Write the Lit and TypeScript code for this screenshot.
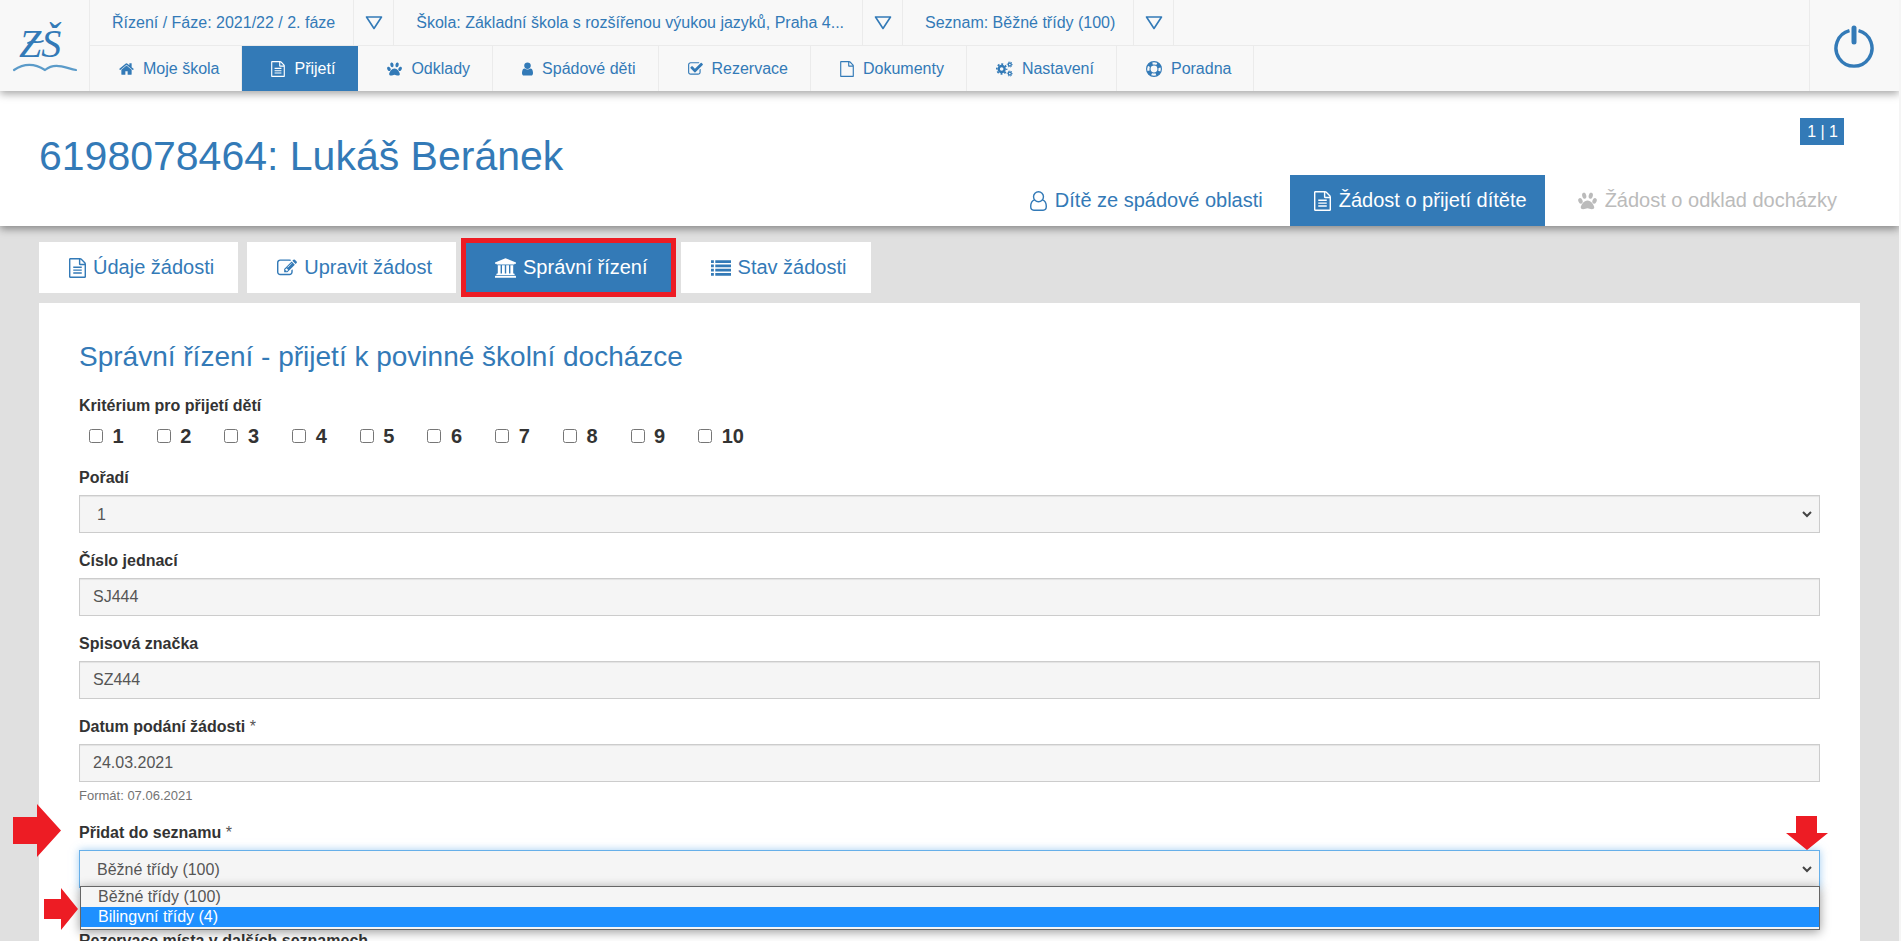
import { LitElement, html, css, svg } from "lit";
import { customElement, property } from "lit/decorators.js";

const fileOutline =
  "M1596 380q28 28 48 76t20 88v1152q0 40-28 68t-68 28h-1344q-40 0-68-28t-28-68v-1600q0-40 28-68t68-28h896q40 0 88 20t76 48zm-444-244v376h376q-10-29-22-41l-313-313q-12-12-41-22zm384 1528v-1024h-416q-40 0-68-28t-28-68v-416h-768v1536h1280z";

const gear = (cx: number, cy: number, r: number, w: number, teeth: number) => {
  const outer = r + w / 2 + w * 0.3;
  const dash = (2 * Math.PI * outer) / (teeth * 2);
  return svg`
    <circle cx=${cx} cy=${cy} r=${r} fill="none" stroke="currentColor" stroke-width=${w}></circle>
    <circle cx=${cx} cy=${cy} r=${outer} fill="none" stroke="currentColor" stroke-width=${w * 0.7}
      stroke-dasharray="${dash} ${dash}" stroke-dashoffset=${dash / 2}></circle>`;
};

const icons: Record<string, { box: string; ratio: number; art: unknown }> = {
  home: {
    box: "64 0 1664 1792",
    ratio: 1664 / 1792,
    art: svg`<path d="M1472 992v480q0 26-19 45t-45 19h-384v-384h-256v384h-384q-26 0-45-19t-19-45v-480q0-1 .5-3t.5-3l575-474 575 474q1 2 1 6zm223-69l-62 74q-8 9-21 11h-3q-13 0-21-7l-692-577-692 577q-12 8-24 7-13-2-21-11l-62-74q-8-10-7-23.5t11-21.5l719-599q32-26 76-26t76 26l244 204v-195q0-14 9-23t23-9h192q14 0 23 9t9 23v408l219 182q10 8 11 21.5t-7 23.5z"></path>`,
  },
  fileText: {
    box: "128 0 1536 1792",
    ratio: 1536 / 1792,
    art: svg`<path d=${fileOutline}></path><path d="M512 768h768v128h-768zM512 1024h768v128h-768zM512 1280h768v128h-768z"></path>`,
  },
  file: { box: "128 0 1536 1792", ratio: 1536 / 1792, art: svg`<path d=${fileOutline}></path>` },
  paw: {
    box: "64 64 1664 1664",
    ratio: 1664 / 1792,
    art: svg`
      <ellipse cx="610" cy="430" rx="180" ry="270" transform="rotate(-14 610 430)"></ellipse>
      <ellipse cx="1182" cy="430" rx="180" ry="270" transform="rotate(14 1182 430)"></ellipse>
      <ellipse cx="278" cy="880" rx="180" ry="250" transform="rotate(-24 278 880)"></ellipse>
      <ellipse cx="1514" cy="880" rx="180" ry="250" transform="rotate(24 1514 880)"></ellipse>
      <path d="M896 850c300 0 590 400 590 620 0 110-80 146-206 146-150 0-260-90-384-90s-240 90-390 90c-120 0-200-36-200-146 0-220 290-620 590-620z"></path>`,
  },
  user: {
    box: "256 0 1280 1792",
    ratio: 1280 / 1792,
    art: svg`<path d="M1536 1399q0 109-62.5 187t-150.5 78h-854q-88 0-150.5-78t-62.5-187q0-85 8.5-160.5t31.5-152 58.5-131 94-89 134.5-34.5q131 128 313 128t313-128q76 0 134.500 34.500t94 89 58.500 131 31.500 152 8.500 160.500zm-256-887q0 159-112.500 271.500t-271.500 112.500-271.500-112.500-112.500-271.500 112.500-271.500 271.500-112.500 271.500 112.500 112.500 271.500z"></path>`,
  },
  userOutline: {
    box: "0 0 1536 1792",
    ratio: 1536 / 1792,
    art: svg`<g fill="none" stroke="currentColor" stroke-width="128"><circle cx="768" cy="512" r="448"></circle><path d="M410 790Q64 900 64 1400Q64 1728 352 1728H1184Q1472 1728 1472 1400Q1472 900 1126 790"></path></g>`,
  },
  check: {
    box: "64 0 1664 1792",
    ratio: 1664 / 1792,
    art: svg`<path d="M1472 930v318q0 119-84.5 203.5t-203.5 84.5h-832q-119 0-203.5-84.5t-84.5-203.5v-832q0-119 84.5-203.5t203.5-84.5h832q63 0 117 25 15 7 18 23 3 17-9 29l-49 49q-10 10-23 10-3 0-9-2-23-6-45-6h-832q-66 0-113 47t-47 113v832q0 66 47 113t113 47h832q66 0 113-47t47-113v-254q0-13 9-22l64-64q10-10 23-10 6 0 12 3 20 8 20 29zm231-489l-814 814q-24 24-57 24t-57-24l-430-430q-24-24-24-57t24-57l110-110q24-24 57-24t57 24l263 263 647-647q24-24 57-24t57 24l110 110q24 24 24 57t-24 57z"></path>`,
  },
  gears: {
    box: "0 0 1920 1792",
    ratio: 1920 / 1792,
    art: svg`${gear(640, 896, 340, 270, 8)}${gear(1560, 384, 170, 150, 6)}${gear(1560, 1408, 170, 150, 6)}`,
  },
  ring: {
    box: "0 0 1792 1792",
    ratio: 1,
    art: svg`<g fill="none" stroke="currentColor"><circle cx="896" cy="896" r="832" stroke-width="128"></circle><circle cx="896" cy="896" r="448" stroke-width="128"></circle><circle cx="896" cy="896" r="640" stroke-width="400" pathLength="80" stroke-dasharray="10 10" stroke-dashoffset="-5"></circle></g>`,
  },
  edit: {
    box: "0 0 1792 1792",
    ratio: 1,
    art: svg`<path d="M888 1184l116-116-152-152-116 116v56h96v96h56zm440-720q-16-16-33 1l-350 350q-17 17-1 33t33-1l350-350q17-17 1-33zm80 594v190q0 119-84.5 203.5t-203.5 84.5h-832q-119 0-203.5-84.5t-84.5-203.5v-832q0-119 84.5-203.5t203.5-84.5h832q63 0 117 25 15 7 18 23 3 17-9 29l-49 49q-14 14-32 8-23-6-45-6h-832q-66 0-113 47t-47 113v832q0 66 47 113t113 47h832q66 0 113-47t47-113v-126q0-13 9-22l64-64q15-15 35-7t20 29zm-96-738l288 288-672 672h-288v-288zm444 132l-92 92-288-288 92-92q28-28 68-28t68 28l152 152q28 28 28 68t-28 68z"></path>`,
  },
  bank: {
    box: "0 0 1920 1792",
    ratio: 1920 / 1792,
    art: svg`<path d="M960 0l960 384v128h-128q0 26-20.5 45t-48.5 19h-1526q-28 0-48.5-19t-20.5-45h-128v-128zm-704 640h256v768h128v-768h256v768h128v-768h256v768h128v-768h256v768h59q28 0 48.5 19t20.5 45v64h-1664v-64q0-26 20.5-45t48.5-19h59v-768zm1595 960q28 0 48.5 19t20.5 45v128h-1920v-128q0-26 20.5-45t48.5-19h1782z"></path>`,
  },
  list: {
    box: "0 0 1792 1792",
    ratio: 1,
    art: svg`${[192, 576, 960, 1344].map(
      (y) => svg`<path d="M0 ${y}h256v256h-256zM384 ${y}h1408v256h-1408z"></path>`,
    )}`,
  },
};

@customElement("fa-icon")
export class FaIcon extends LitElement {
  @property() name = "file";
  @property({ type: Number }) size = 16;

  static styles = css`
    :host {
      display: inline-flex;
      flex: none;
    }
    svg {
      display: block;
      fill: currentColor;
    }
  `;

  render() {
    const icon = icons[this.name];
    return html`<svg
      viewBox=${icon.box}
      width=${Math.round(this.size * icon.ratio)}
      height=${this.size}
      preserveAspectRatio="xMidYMid meet"
      aria-hidden="true"
    >${icon.art}</svg>`;
  }
}

@customElement("app-root")
export class AppRoot extends LitElement {
  static styles = css`
    :host {
      display: block;
      box-sizing: border-box;
      height: 100vh;
      overflow-x: hidden;
      overflow-y: auto;
      scrollbar-width: none;
      border-right: 2px solid #f5f5f5;
      background: #e0e0e0;
      color: #333;
      font: 16px/23px "Liberation Sans", Arial, sans-serif;
      --blue: #337ab7;
      --red: #ed1c24;
    }
    * {
      box-sizing: border-box;
    }
    a {
      color: var(--blue);
      text-decoration: none;
    }

    .topbar {
      position: relative;
      z-index: 2;
      display: flex;
      height: 91px;
      background: #f8f8f8;
      box-shadow: 0 3px 8px rgba(0, 0, 0, 0.35);
    }
    .logo {
      display: flex;
      width: 90px;
      border-right: 1px solid #ebebeb;
    }
    .logo text {
      font: italic 40px "Liberation Serif", serif;
      fill: var(--blue);
    }
    .rows {
      flex: 1;
      min-width: 0;
    }
    .row {
      display: flex;
      height: 46px;
      white-space: nowrap;
    }
    .row.context {
      border-bottom: 1px solid #ebebeb;
    }
    .row.menu {
      height: 45px;
    }
    .context a,
    .context button {
      display: flex;
      align-items: center;
      border: 0;
      border-right: 1px solid #ebebeb;
      background: none;
    }
    .context a {
      padding: 0 18px 0 22px;
    }
    .context button {
      width: 40px;
      padding: 0;
      justify-content: center;
      color: var(--blue);
    }
    .menu a {
      display: flex;
      align-items: center;
      gap: 9px;
      padding: 0 22px 0 29px;
      border-right: 1px solid #ebebeb;
    }
    .menu a.active {
      background: var(--blue);
      border-color: var(--blue);
      color: #fff;
    }
    .power {
      display: flex;
      width: 90px;
      align-items: center;
      justify-content: center;
      padding: 0 2px 0 0;
      border: 0;
      border-left: 1px solid #ebebeb;
      background: none;
      color: var(--blue);
    }

    .titlebar {
      position: relative;
      z-index: 1;
      display: flex;
      justify-content: space-between;
      padding-left: 39px;
      background: #fff;
      box-shadow: 0 3px 8px rgba(0, 0, 0, 0.4);
    }
    h1 {
      margin: 43px 0 0;
      color: var(--blue);
      font-size: 41px;
      line-height: 45px;
      font-weight: 400;
    }
    .side {
      display: flex;
      flex-direction: column;
      align-items: flex-end;
      gap: 30px;
      padding: 27px 44px 0 0;
    }
    .badge {
      padding: 0 6px 0 7px;
      background: var(--blue);
      color: #fff;
      line-height: 27px;
      margin-right: 11px;
    }
    .tabs {
      display: flex;
      font-size: 20px;
      gap: 9px;
    }
    .tabs a {
      display: flex;
      align-items: center;
      gap: 7px;
      height: 51px;
    }
    .tabs a.active {
      background: var(--blue);
      color: #fff;
    }
    .scopes a {
      gap: 8px;
      padding: 0 18px 0 24px;
    }
    .scopes a.disabled {
      color: #bbb;
    }
    .sections {
      padding: 16px 39px 10px;
    }
    .sections a {
      padding: 0 24px 0 30px;
      background: #fff;
    }
    .sections a.active {
      outline: 5px solid var(--red);
      outline-offset: -1px;
    }

    .panel {
      margin: 0 39px;
      padding: 38px 40px 40px;
      background: #fff;
    }
    h2 {
      margin: 0 0 22px;
      color: var(--blue);
      font-size: 28px;
      line-height: 31px;
      font-weight: 400;
    }
    .field {
      position: relative;
      margin: 0 0 16px;
      padding: 0;
      border: 0;
    }
    .field.open {
      margin-bottom: 41px;
    }
    .caption {
      display: block;
      margin: 0 0 6px;
      padding: 0;
      font-weight: 700;
    }
    .caption abbr {
      font-weight: 400;
      text-decoration: none;
      color: #555;
    }
    .checks {
      display: flex;
      gap: 33px;
      margin: -2px 0;
      padding-left: 10px;
      font-size: 20px;
      line-height: 31px;
      font-weight: 700;
    }
    .checks input {
      width: 14px;
      height: 14px;
      margin: 0 4px 0 0;
      vertical-align: 0;
    }
    .control {
      display: block;
      width: 100%;
      height: 38px;
      padding: 6px 13px;
      border: 1px solid #ccc;
      border-radius: 0;
      outline: 0;
      background: #f5f5f5;
      box-shadow: inset 0 1px 1px rgba(0, 0, 0, 0.075);
      color: #555;
      font: 16px/23px "Liberation Sans", Arial, sans-serif;
    }
    select.control {
      appearance: none;
      padding: 6px 30px 6px 17px;
      background: #f5f5f5
        url("data:image/svg+xml,%3Csvg xmlns='http://www.w3.org/2000/svg' width='12' height='8' fill='none' stroke='%23444' stroke-width='2'%3E%3Cpath d='M2 2l4 4 4-4'/%3E%3C/svg%3E")
        no-repeat right 6px center;
    }
    .open .control {
      border-color: #66afe9;
      box-shadow: 0 0 8px rgba(102, 175, 233, 0.6);
    }
    .help {
      margin: 5px 0 0;
      color: #737373;
      font-size: 13px;
      line-height: 18px;
    }
    .options {
      position: absolute;
      z-index: 1;
      top: calc(100% - 2px);
      left: 1px;
      right: 0;
      margin: 0;
      padding: 0 0 2px;
      border: 1px solid #666;
      background: #f5f5f5;
      box-shadow: 0 2px 10px rgba(0, 0, 0, 0.4);
      list-style: none;
      color: #555;
    }
    .options li {
      padding-left: 17px;
      line-height: 20px;
    }
    .options li.current {
      background: #1e90ff;
      color: #fff;
    }
    .arrow {
      position: absolute;
      z-index: 2;
      fill: var(--red);
    }
    .arrow.label {
      left: -66px;
      top: -17px;
    }
    .arrow.option {
      left: -35px;
      top: 67px;
    }
    .arrow.opener {
      right: -8px;
      top: -5px;
    }
  `;

  private context = [
    "Řízení / Fáze: 2021/22 / 2. fáze",
    "Škola: Základní škola s rozšířenou výukou jazyků, Praha 4...",
    "Seznam: Běžné třídy (100)",
  ];

  private menu = [
    ["home", "Moje škola"],
    ["fileText", "Přijetí"],
    ["paw", "Odklady"],
    ["user", "Spádové děti"],
    ["check", "Rezervace"],
    ["file", "Dokumenty"],
    ["gears", "Nastavení"],
    ["ring", "Poradna"],
  ];

  private sections = [
    ["fileText", "Údaje žádosti"],
    ["edit", "Upravit žádost"],
    ["bank", "Správní řízení"],
    ["list", "Stav žádosti"],
  ];

  render() {
    return html`
      <header class="topbar">
        <a class="logo" href="#" aria-label="Základní školy">
          <svg width="89" height="91" viewBox="0 0 89 91">
            <text x="19" y="57">ZŠ</text>
            <g fill="none" stroke-linecap="round">
              <path d="M28 43C33 40 37 44 43 41" stroke="#337ab7" stroke-width="1.8"></path>
              <path d="M14 70C23 64 34 63 45 70C55 62 65 68 76 70" stroke="#5b9bc9" stroke-width="2.2"></path>
            </g>
          </svg>
        </a>
        <div class="rows">
          <div class="row context">
            ${this.context.map(
              (item) => html`<a href="#">${item}</a>
                <button type="button" aria-label="Změnit: ${item}">
                  <svg width="18" height="15" viewBox="0 0 18 15" fill="none" stroke="currentColor" stroke-width="1.6" stroke-linejoin="round">
                    <path d="M1.500 2H16.500L9 13.500Z"></path>
                  </svg>
                </button>`,
            )}
          </div>
          <nav class="row menu">
            ${this.menu.map(
              ([icon, text]) => html`<a href="#" class=${text === "Přijetí" ? "active" : ""}
                ><fa-icon name=${icon}></fa-icon>${text}</a
              >`,
            )}
          </nav>
        </div>
        <button class="power" type="button" aria-label="Odhlásit">
          <svg width="42" height="44" viewBox="0 0 42 44" fill="none" stroke="currentColor" stroke-linecap="round">
            <path d="M16.5 6.7A18 18 0 1 0 25.5 6.7" stroke-width="3.4" stroke-linecap="butt"></path>
            <path d="M21 4V18" stroke-width="5"></path>
          </svg>
        </button>
      </header>

      <div class="titlebar">
        <h1>6198078464: Lukáš Beránek</h1>
        <div class="side">
          <span class="badge">1 | 1</span>
          <nav class="tabs scopes">
            <a href="#"><fa-icon name="userOutline" size="20"></fa-icon>Dítě ze spádové oblasti</a>
            <a href="#" class="active"><fa-icon name="fileText" size="20"></fa-icon>Žádost o přijetí dítěte</a>
            <a class="disabled"><fa-icon name="paw" size="20"></fa-icon>Žádost o odklad docházky</a>
          </nav>
        </div>
      </div>

      <nav class="tabs sections">
        ${this.sections.map(
          ([icon, text]) => html`<a href="#" class=${icon === "bank" ? "active" : ""}
            ><fa-icon name=${icon} size="20"></fa-icon>${text}</a
          >`,
        )}
      </nav>

      <main class="panel">
        <h2>Správní řízení - přijetí k povinné školní docházce</h2>
        <form>
          <fieldset class="field">
            <legend class="caption">Kritérium pro přijetí dětí</legend>
            <div class="checks">
              ${Array.from({ length: 10 }, (_, i) => html`<label><input type="checkbox" /> ${i + 1}</label>`)}
            </div>
          </fieldset>
          <div class="field">
            <label class="caption" for="order">Pořadí</label>
            <select class="control" id="order"><option>1</option></select>
          </div>
          <div class="field">
            <label class="caption" for="reference">Číslo jednací</label>
            <input class="control" id="reference" value="SJ444" />
          </div>
          <div class="field">
            <label class="caption" for="file">Spisová značka</label>
            <input class="control" id="file" value="SZ444" />
          </div>
          <div class="field">
            <label class="caption" for="date">Datum podání žádosti <abbr>*</abbr></label>
            <input class="control" id="date" value="24.03.2021" />
            <p class="help">Formát: 07.06.2021</p>
          </div>
          <div class="field open">
            <label class="caption" for="list">Přidat do seznamu <abbr>*</abbr></label>
            <select class="control" id="list">
              <option>Běžné třídy (100)</option>
              <option>Bilingvní třídy (4)</option>
            </select>
            <ul class="options" role="listbox" aria-label="Přidat do seznamu">
              <li role="option">Běžné třídy (100)</li>
              <li role="option" class="current" aria-selected="true">Bilingvní třídy (4)</li>
            </ul>
            <svg class="arrow label" width="48" height="53" viewBox="0 0 48 53"><path d="M0 13H24V0L48 26.5L24 53V40H0Z"></path></svg>
            <svg class="arrow option" width="34" height="42" viewBox="0 0 34 42"><path d="M0 11H17V0L34 21L17 42V31H0Z"></path></svg>
            <svg class="arrow opener" width="42" height="34" viewBox="0 0 42 34"><path d="M10 0H31V17H42L21 34L0 17H10Z"></path></svg>
          </div>
          <div class="field">
            <label class="caption" for="others">Rezervace místa v dalších seznamech</label>
            <select class="control" id="others"></select>
          </div>
        </form>
      </main>
    `;
  }
}
